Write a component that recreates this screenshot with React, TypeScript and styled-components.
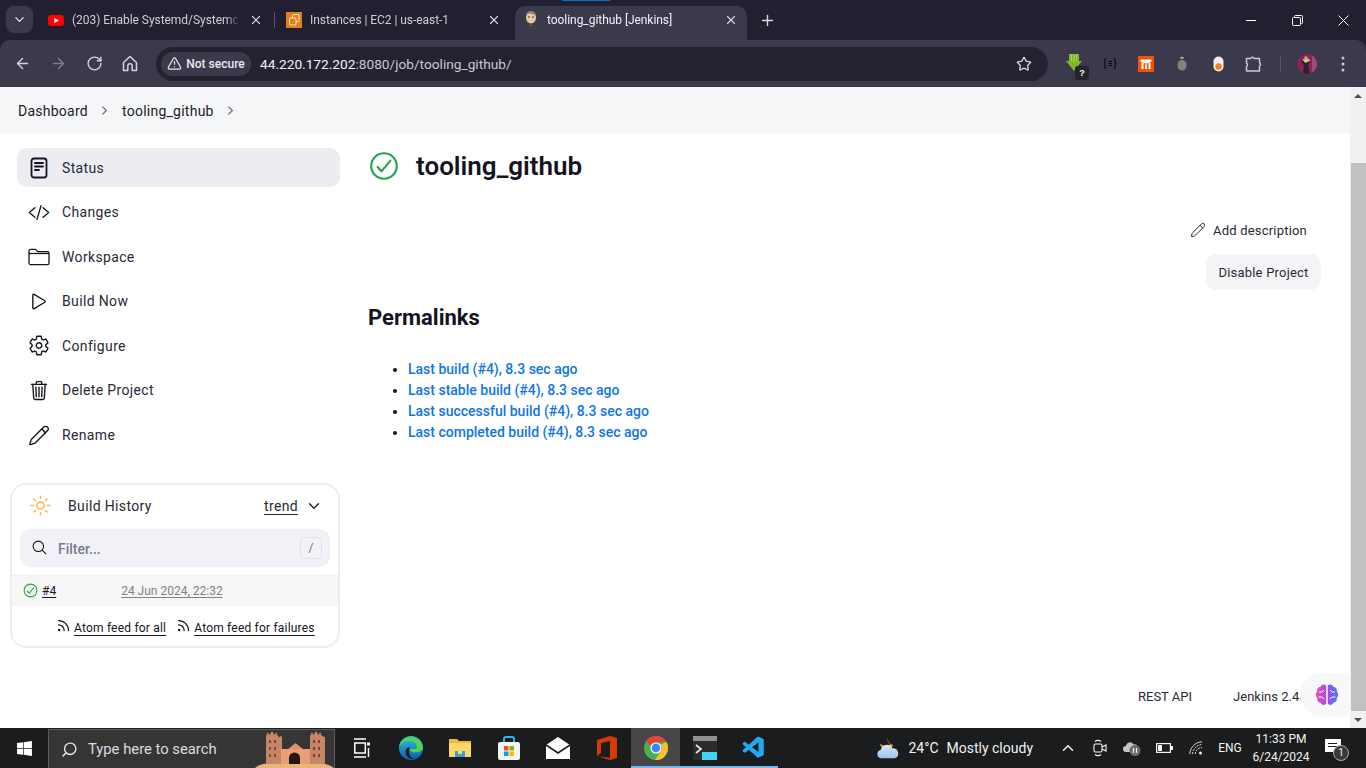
import React from "react";
import styled, { createGlobalStyle } from "styled-components";
import {
  IoCheckmarkCircleOutline,
  IoChevronDown,
  IoChevronForward,
  IoCodeSlashOutline,
  IoPlayOutline,
  IoSearchOutline,
  IoSettingsOutline,
  IoSunnyOutline,
  IoTrashOutline,
} from "react-icons/io5";
import {
  LuArrowLeft,
  LuArrowRight,
  LuRotateCw,
  LuStar,
  LuX,
  LuPlus,
  LuPencil,
  LuTriangleAlert,
  LuChevronUp,
  LuRss,
  LuSearch,
} from "react-icons/lu";
import { FaWindows } from "react-icons/fa";
import { VscVscode } from "react-icons/vsc";

const GlobalStyle = createGlobalStyle`
  html, body { margin: 0; padding: 0; height: 100%; overflow: hidden; background: #fff; }
  * { box-sizing: border-box; }
  body { font-family: Roboto, "Noto Sans", sans-serif; }
`;

const navItems = [
  { id: 1, icon: <StatusIcon />, label: "Status", active: true },
  { id: 2, icon: <IoCodeSlashOutline />, label: "Changes" },
  { id: 3, icon: <FolderIcon />, label: "Workspace" },
  { id: 4, icon: <IoPlayOutline />, label: "Build Now" },
  { id: 5, icon: <IoSettingsOutline />, label: "Configure" },
  { id: 6, icon: <IoTrashOutline />, label: "Delete Project" },
  { id: 7, icon: <LuPencil strokeWidth={1.5} />, label: "Rename" },
];

const permalinks = [
  "Last build (#4), 8.3 sec ago",
  "Last stable build (#4), 8.3 sec ago",
  "Last successful build (#4), 8.3 sec ago",
  "Last completed build (#4), 8.3 sec ago",
];

function StatusIcon() {
  return (
    <svg width="20" height="22" viewBox="0 0 20 22" fill="none" stroke="#14141f" strokeWidth="1.8" strokeLinecap="round">
      <rect x="2.5" y="1.5" width="15" height="19" rx="2.5" />
      <path d="M6 6h8M6 9.5h8M6 13h4" />
    </svg>
  );
}

function FolderIcon() {
  return (
    <svg width="22" height="18" viewBox="0 0 22 18" fill="none" stroke="#14141f" strokeWidth="1.3" strokeLinejoin="round">
      <path d="M1 15V3a1.6 1.6 0 0 1 1.6-1.6h5l2 2.200h9.800A1.600 1.600 0 0 1 21 5.200V15a1.600 1.600 0 0 1-1.600 1.600H2.600A1.600 1.600 0 0 1 1 15z" />
      <path d="M1 5.500h20" />
    </svg>
  );
}

function YoutubeIcon() {
  return (
    <svg width="16" height="11" viewBox="0 0 16 11">
      <rect width="16" height="11" rx="3" fill="#f00" />
      <path d="M6.300 3 11 5.500 6.300 8z" fill="#fff" />
    </svg>
  );
}

function AwsIcon() {
  return (
    <svg width="16" height="16" viewBox="0 0 16 16">
      <rect width="16" height="16" fill="#e2801c" />
      <rect x="6.500" y="2.500" width="6.500" height="7" rx="1" fill="none" stroke="#fbe3c8" strokeWidth="1" />
      <rect x="3.500" y="6" width="6.500" height="7" rx="1" fill="#e2801c" stroke="#fbe3c8" strokeWidth="1" />
    </svg>
  );
}

function JenkinsIcon() {
  return (
    <svg width="16" height="18" viewBox="0 0 16 18">
      <ellipse cx="8" cy="6.500" rx="5" ry="6" fill="#e8c9a8" />
      <path d="M3 6c0-4 2-6 5-6s5 2 5 5c-2-2-6-3-8-2-1 .6-2 2-2 3z" fill="#8a8170" />
      <path d="M3 18c0-3 2-5 5-5s5 2 5 5z" fill="#39424a" />
      <path d="M7 13.500h2l.4 1.600H6.600z" fill="#c53a34" />
      <circle cx="6" cy="6" r=".8" fill="#222" />
      <circle cx="10" cy="6" r=".8" fill="#222" />
    </svg>
  );
}

function HomeIcon() {
  return (
    <svg width="16" height="17" viewBox="0 0 16 17" fill="none" stroke="currentColor" strokeWidth="1.500" strokeLinejoin="round">
      <path d="M1.500 7.500 8 1.500l6.500 6V15.500h-4.300V11a2.200 2.200 0 0 0-4.400 0v4.500H1.500z" />
    </svg>
  );
}

function SaverIcon() {
  return (
    <svg width="16" height="19" viewBox="0 0 16 19">
      <path d="M3 0h10v7h3L8 17 0 7h3z" fill="#7fb52a" />
      <path d="M5.500 0v7M8 0v9M10.500 0v7" stroke="#a7d83f" strokeWidth="1" />
    </svg>
  );
}

function JsonIcon() {
  return (
    <svg width="14" height="11" viewBox="0 0 14 11" fill="none" stroke="#0c0c10" strokeWidth="1.200">
      <path d="M3 .6C1.500.6 2 2.500 2 4c0 1-.4 1.500-1.300 1.500C1.600 5.500 2 6 2 7c0 1.500-.5 3.400 1 3.400" />
      <path d="M11 .6c1.500 0 1 1.900 1 3.400 0 1 .4 1.500 1.300 1.500-.9 0-1.300.5-1.300 1.500 0 1.500.5 3.400-1 3.400" />
      <path d="M5 3.500h4M5 5.500h4M5 7.500h4" />
    </svg>
  );
}

function RibbonIcon() {
  return (
    <svg width="16" height="16" viewBox="0 0 16 16">
      <rect width="16" height="16" fill="#f4520b" />
      <path d="M2.500 3.500h11v2.200L8 7.800 2.500 5.700z" fill="#fff" />
      <path d="M3.500 7h2v6h-2zM7 8.500h2V13H7zM10.500 7h2v6h-2z" fill="#fff" />
    </svg>
  );
}

function BeanIcon() {
  return (
    <svg width="10" height="15" viewBox="0 0 10 15">
      <path d="M3 1.500C3 .5 7 .5 7 1.500L6.500 3h-3z" fill="#9b9a94" />
      <path d="M5 4c3 0 4.500 2 4.500 5S8 14.500 5 14.500.5 12 .5 9 2 4 5 4z" fill="#84837f" />
    </svg>
  );
}

function EggIcon() {
  return (
    <svg width="11" height="16" viewBox="0 0 11 16">
      <rect x=".5" y=".5" width="10" height="15" rx="5" fill="#f5efe8" />
      <circle cx="5.500" cy="10.500" r="3.200" fill="#f08020" />
    </svg>
  );
}

function PuzzleIcon() {
  return (
    <svg width="18" height="17" viewBox="0 0 18 17" fill="none" stroke="#c9c7d8" strokeWidth="1.500" strokeLinejoin="round">
      <path d="M1.500 3.500h4.300a1.800 1.800 0 0 1 3.400 0h5.300v4.200a1.800 1.800 0 0 1 0 3.200v5H1.500v-4.300a2.200 2.200 0 0 0 0-3.600z" />
    </svg>
  );
}

function AvatarIcon() {
  return (
    <svg width="20" height="20" viewBox="0 0 20 20">
      <clipPath id="avatarClip">
        <circle cx="10" cy="10" r="10" />
      </clipPath>
      <g clipPath="url(#avatarClip)">
        <rect width="20" height="20" fill="#8a2358" />
        <rect x="15" y="0" width="5" height="20" fill="#a0506f" />
        <path d="M4 6l6-2 3 3-2 5 2 8H6l1-8z" fill="#2a2026" />
        <path d="M5 5.500l6-1 2.500 2-5 2.500z" fill="#d8c58c" />
        <circle cx="9" cy="4" r="1.800" fill="#c9a27c" />
      </g>
    </svg>
  );
}

function MenuDots() {
  return (
    <svg width="4" height="16" viewBox="0 0 4 16" fill="#c9c7d8">
      <circle cx="2" cy="2" r="1.500" />
      <circle cx="2" cy="8" r="1.500" />
      <circle cx="2" cy="14" r="1.500" />
    </svg>
  );
}

function MinimizeIcon() {
  return (
    <svg width="10" height="10" viewBox="0 0 10 10" stroke="#fff" strokeWidth="1">
      <path d="M0 5.500h10" />
    </svg>
  );
}

function RestoreIcon() {
  return (
    <svg width="11" height="11" viewBox="0 0 11 11" fill="none" stroke="#fff" strokeWidth="1">
      <rect x=".5" y="2.500" width="8" height="8" rx="1" />
      <path d="M2.500 2.500v-1a1 1 0 0 1 1-1h6a1 1 0 0 1 1 1v6a1 1 0 0 1-1 1h-1" />
    </svg>
  );
}

function CloseIcon() {
  return (
    <svg width="11" height="11" viewBox="0 0 11 11" stroke="#fff" strokeWidth="1">
      <path d="M.5.500l10 10M10.500.500l-10 10" />
    </svg>
  );
}

function BrainIcon() {
  return (
    <svg width="26" height="26" viewBox="0 0 26 26" fill="none">
      <defs>
        <linearGradient id="brainGrad" x1="0" y1="0" x2="1" y2="0">
          <stop offset="0" stopColor="#ef4fa8" />
          <stop offset="0.55" stopColor="#9a4df0" />
          <stop offset="1" stopColor="#4c7df0" />
        </linearGradient>
      </defs>
      <path d="M12.200 3.500c-2-2-5-1-5.500 1.200C4.200 5 2.600 7.200 3.300 9.300 1.300 11 1.300 14.500 3.300 16c-.5 2.600 1.300 4.700 3.400 4.800.7 2.200 3.800 3 5.500 1zM13.800 3.500c2-2 5-1 5.500 1.200 2.500.3 4.100 2.500 3.400 4.600 2 1.700 2 5.200 0 6.700.5 2.600-1.300 4.700-3.400 4.800-.7 2.200-3.800 3-5.500 1z" fill="url(#brainGrad)" />
      <path d="M5 10h3l2-2M4.500 15H8l2 2M21 10h-3l-2-2M21.500 15H18l-2 2" stroke="#fff" strokeWidth="1" />
    </svg>
  );
}

function EdgeIcon() {
  return (
    <svg width="26" height="26" viewBox="0 0 26 26">
      <defs>
        <linearGradient id="edgeA" x1="0" y1="0" x2="0" y2="1">
          <stop offset="0" stopColor="#35c1f1" />
          <stop offset="1" stopColor="#0c59a4" />
        </linearGradient>
      </defs>
      <circle cx="13" cy="13" r="12" fill="url(#edgeA)" />
      <path d="M25 13c0-6-5-11-12-11C7 2 2 6 1 12c2-4 6-6 10-6 5 0 8 3 8 6 0 1-.6 2-2 2h-5c0 3 4 4 8 3 2-.6 5-2 5-4z" fill="#54d34e" />
      <path d="M11 12c-3 1-4 4-3 7 1 3 4 5 8 5-3-1-5-4-5-7 0-2 1-4 0-5z" fill="#1b1c1d" />
    </svg>
  );
}

function ExplorerIcon() {
  return (
    <svg width="22" height="22" viewBox="0 0 22 22">
      <path d="M0 2h8l2 2h12v16H0z" fill="#f0b93a" />
      <path d="M0 6h22v14H0z" fill="#fbd768" />
      <path d="M6 14h10v6H6z" fill="#2f9fe0" />
      <path d="M9 14h4v3H9z" fill="#fbd768" />
    </svg>
  );
}

function StoreIcon() {
  return (
    <svg width="22" height="24" viewBox="0 0 22 24">
      <path d="M6 7V3a2 2 0 0 1 2-2h6a2 2 0 0 1 2 2v4" fill="none" stroke="#2bb6e8" strokeWidth="2" />
      <rect x="0" y="6" width="22" height="18" rx="2" fill="#f4f4f4" />
      <rect x="6" y="10" width="4.500" height="4.500" fill="#f25022" />
      <rect x="11.500" y="10" width="4.500" height="4.500" fill="#7fba00" />
      <rect x="6" y="15.500" width="4.500" height="4.500" fill="#00a4ef" />
      <rect x="11.500" y="15.500" width="4.500" height="4.500" fill="#ffb900" />
    </svg>
  );
}

function MailIcon() {
  return (
    <svg width="24" height="24" viewBox="0 0 24 24">
      <path d="M0 9 12 1l12 8v14H0z" fill="#fff" />
      <path d="M0 9l12 8 12-8" fill="none" stroke="#1b1c1d" strokeWidth="1.600" />
    </svg>
  );
}

function OfficeIcon() {
  return (
    <svg width="20" height="24" viewBox="0 0 20 24">
      <path d="M0 4 13 0l7 2v20l-7 2-13-4 13 2V5L4 7v10l-4 3z" fill="#d83b01" />
    </svg>
  );
}

function ChromeIcon() {
  return (
    <svg width="24" height="24" viewBox="0 0 24 24">
      <circle cx="12" cy="12" r="12" fill="#4caf50" />
      <path d="M12 0a12 12 0 0 1 10.400 6H12a6 6 0 0 0-5.600 3.800L2.200 5A12 12 0 0 1 12 0z" fill="#ea4335" />
      <path d="M22.400 6A12 12 0 0 1 11 24l5.200-8.200A6 6 0 0 0 17 8.500z" fill="#fbc02d" />
      <circle cx="12" cy="12" r="5.600" fill="#fff" />
      <circle cx="12" cy="12" r="4.400" fill="#4285f4" />
    </svg>
  );
}

function TerminalIcon() {
  return (
    <svg width="24" height="24" viewBox="0 0 24 24">
      <rect y="0" width="24" height="24" fill="#2c2c2c" />
      <rect y="0" width="24" height="5" fill="#8f8f8f" />
      <path d="M3 9l5 4-5 4" fill="none" stroke="#e8e8e8" strokeWidth="1.700" />
      <rect x="9" y="16" width="15" height="8" fill="#3fd4f4" />
    </svg>
  );
}

function TaskViewIcon() {
  return (
    <svg width="16" height="20" viewBox="0 0 16 20" fill="none" stroke="#fff" strokeWidth="1.500">
      <path d="M0 1h12M0 19h12" />
      <rect x=".8" y="5" width="10.500" height="10" />
      <path d="M13 4.500h3v3h-3z" fill="#fff" stroke="none" />
      <path d="M14.500 10v9" />
    </svg>
  );
}

function CastleArt() {
  return (
    <svg width="79" height="39" viewBox="0 0 79 39">
      <path d="M0 39c6-5 14-5 20-5h40c7 0 14 1 19 5z" fill="#e9b578" />
      <path d="M11 7l2-4 1.500 3L17 2l2.500 4L21 3l2 4 1 1 3-1v28H11zM55 7l2-4 1.500 3L61 2l2.500 4L65 3l2 4 3 1v27H55z" fill="#c58566" />
      <path d="M26 20h29v15H26z" fill="#e89e76" />
      <path d="M33 20l7.500-6 7.500 6z" fill="#e0906a" />
      <path d="M34 35v-6a5.500 5.500 0 0 1 11 0v6z" fill="#26160f" />
      <path d="M14 11h2v3h-2zM19 11h2v3h-2zM14 18h2v3h-2zM19 18h2v3h-2zM14 25h2v3h-2zM19 25h2v3h-2zM58 11h2v3h-2zM63 11h2v3h-2zM58 18h2v3h-2zM63 18h2v3h-2zM58 25h2v3h-2zM63 25h2v3h-2z" fill="#7a4836" />
    </svg>
  );
}

function WeatherIcon() {
  return (
    <svg width="24" height="24" viewBox="0 0 24 24">
      <defs>
        <linearGradient id="cloudGrad" x1="0" y1="0" x2="0" y2="1">
          <stop offset="0" stopColor="#d7e7f8" />
          <stop offset="1" stopColor="#9cc3ee" />
        </linearGradient>
      </defs>
      <path d="M11 0c-.6 3 .5 6 3 8-3 2.500-8 2-11-.5 1 3.500 4 6 8 6 3 0 6-2 6-5-3.500 0-6-4-6-8.500z" fill="#f0a22e" />
      <path d="M5 23a4.500 4.500 0 0 1-1-8.900 6.500 6.500 0 0 1 12.300-1.700A5.500 5.500 0 0 1 19 23z" fill="url(#cloudGrad)" />
    </svg>
  );
}

function MeetIcon() {
  return (
    <svg width="14" height="19" viewBox="0 0 14 19" fill="none" stroke="#f2f2f2" strokeWidth="1.100">
      <rect x="1" y="5" width="8" height="8" rx="1.500" />
      <path d="M9 8l4-2v6l-4-2" />
      <path d="M2 2.500c1.500-1.500 4.500-1.500 6 0M2 15.500c1.500 1.500 4.500 1.500 6 0" />
    </svg>
  );
}

function CloudPauseIcon() {
  return (
    <svg width="18" height="16" viewBox="0 0 18 16">
      <path d="M3 12a3 3 0 0 1 0-6 4 4 0 0 1 7.500-1.500A3.500 3.500 0 0 1 13 11v1z" fill="#c6c6c6" />
      <circle cx="12" cy="10.500" r="5.500" fill="#6a6a6a" />
      <path d="M10.500 8v5M13.500 8v5" stroke="#f2f2f2" strokeWidth="1.200" />
    </svg>
  );
}

function BatteryIcon() {
  return (
    <svg width="17" height="10" viewBox="0 0 17 10">
      <rect x=".6" y=".6" width="13.800" height="8.800" fill="none" stroke="#f2f2f2" strokeWidth="1.200" />
      <rect x="2" y="2" width="4" height="6" fill="#f2f2f2" />
      <rect x="15" y="3" width="2" height="4" fill="#f2f2f2" />
    </svg>
  );
}

function WifiIcon() {
  return (
    <svg width="14" height="14" viewBox="0 0 14 14" fill="none" stroke="#d8d8d8" strokeWidth="1">
      <path d="M.8 13C1 6.500 6.500 1 13 .8" />
      <path d="M3.500 13c.2-5 4.500-9.300 9.500-9.500" strokeDasharray="2 1" />
      <path d="M6.200 13c.2-3.500 3-6.300 6.800-6.500" strokeDasharray="2 1" />
      <circle cx="11.500" cy="12" r="1.500" fill="#f2f2f2" stroke="none" />
    </svg>
  );
}

export default function App() {
  return (
    <>
      <GlobalStyle />
      <Screen>
        <TabStrip>
          <TopAccent />
          <TabMenu>
            <IoChevronDown />
          </TabMenu>
          <Tab>
            <YoutubeIcon />
            <TabTitle>(203) Enable Systemd/Systemctl</TabTitle>
            <TabClose>
              <LuX />
            </TabClose>
          </Tab>
          <TabDivider />
          <Tab>
            <AwsIcon />
            <TabTitle>Instances | EC2 | us-east-1</TabTitle>
            <TabClose>
              <LuX />
            </TabClose>
          </Tab>
          <Tab $active>
            <JenkinsIcon />
            <TabTitle>tooling_github [Jenkins]</TabTitle>
            <TabClose>
              <LuX />
            </TabClose>
          </Tab>
          <NewTab>
            <LuPlus />
          </NewTab>
          <WindowControls>
            <WindowButton>
              <MinimizeIcon />
            </WindowButton>
            <WindowButton>
              <RestoreIcon />
            </WindowButton>
            <WindowButton>
              <CloseIcon />
            </WindowButton>
          </WindowControls>
        </TabStrip>

        <Toolbar>
          <NavButtons>
            <NavButton>
              <LuArrowLeft />
            </NavButton>
            <NavButton $dim>
              <LuArrowRight />
            </NavButton>
            <NavButton>
              <LuRotateCw />
            </NavButton>
            <NavButton>
              <HomeIcon />
            </NavButton>
          </NavButtons>
          <Omnibox>
            <SecurityChip>
              <LuTriangleAlert />
              Not secure
            </SecurityChip>
            <Url>
              44.220.172.202<UrlDim>:8080/job/tooling_github/</UrlDim>
            </Url>
            <StarSlot>
              <LuStar />
            </StarSlot>
          </Omnibox>
          <Extensions>
            <ExtSlot>
              <SaverIcon />
              <ExtBadge>?</ExtBadge>
            </ExtSlot>
            <ExtSlot>
              <JsonIcon />
            </ExtSlot>
            <ExtSlot>
              <RibbonIcon />
            </ExtSlot>
            <ExtSlot>
              <BeanIcon />
            </ExtSlot>
            <ExtSlot>
              <EggIcon />
            </ExtSlot>
            <ExtSlot>
              <PuzzleIcon />
            </ExtSlot>
            <ToolbarSep />
            <ExtSlot>
              <AvatarIcon />
            </ExtSlot>
            <ExtSlot>
              <MenuDots />
            </ExtSlot>
          </Extensions>
        </Toolbar>

        <PageArea>
          <Content>
            <Breadcrumbs>
              <Crumb>Dashboard</Crumb>
              <IoChevronForward />
              <Crumb>tooling_github</Crumb>
              <IoChevronForward />
            </Breadcrumbs>

            <Columns>
              <Sidebar>
                <SideNav>
                  {navItems.map((item) => (
                    <SideItem key={item.id} $active={item.active}>
                      <SideIcon>{item.icon}</SideIcon>
                      {item.label}
                    </SideItem>
                  ))}
                </SideNav>

                <HistoryCard>
                  <HistoryHead>
                    <SunSlot>
                      <IoSunnyOutline />
                    </SunSlot>
                    <HistoryTitle>Build History</HistoryTitle>
                    <Trend>trend</Trend>
                    <TrendChevron>
                      <IoChevronDown />
                    </TrendChevron>
                  </HistoryHead>
                  <FilterBox>
                    <IoSearchOutline />
                    <FilterText>Filter...</FilterText>
                    <KeyHint>/</KeyHint>
                  </FilterBox>
                  <BuildRow>
                    <IoCheckmarkCircleOutline />
                    <BuildNumber>#4</BuildNumber>
                    <BuildDate>24 Jun 2024, 22:32</BuildDate>
                  </BuildRow>
                  <Feeds>
                    <LuRss />
                    <FeedLink>Atom feed for all</FeedLink>
                    <LuRss />
                    <FeedLink>Atom feed for failures</FeedLink>
                  </Feeds>
                </HistoryCard>
              </Sidebar>

              <Main>
                <TitleRow>
                  <IoCheckmarkCircleOutline />
                  <Title>tooling_github</Title>
                </TitleRow>
                <Actions>
                  <AddDescription>
                    <LuPencil strokeWidth={1.5} />
                    Add description
                  </AddDescription>
                  <DisableButton>Disable Project</DisableButton>
                </Actions>
                <SectionHead>Permalinks</SectionHead>
                <LinkList>
                  {permalinks.map((text) => (
                    <li key={text}>{text}</li>
                  ))}
                </LinkList>
              </Main>
            </Columns>

            <Footer>
              <FooterLink>REST API</FooterLink>
              <FooterLink>Jenkins 2.452.2</FooterLink>
            </Footer>
            <BrainBubble>
              <BrainIcon />
            </BrainBubble>
          </Content>

          <Scrollbar>
            <ScrollArrow />
            <ScrollThumb />
            <ScrollArrow $down />
          </Scrollbar>
        </PageArea>

        <Taskbar>
          <StartButton>
            <FaWindows />
          </StartButton>
          <SearchBox>
            <LuSearch />
            <SearchText>Type here to search</SearchText>
            <CastleArt />
          </SearchBox>
          <TaskApps>
            <TaskApp>
              <TaskViewIcon />
            </TaskApp>
            <TaskApp>
              <EdgeIcon />
            </TaskApp>
            <TaskApp>
              <ExplorerIcon />
            </TaskApp>
            <TaskApp>
              <StoreIcon />
            </TaskApp>
            <TaskApp>
              <MailIcon />
            </TaskApp>
            <TaskApp>
              <OfficeIcon />
            </TaskApp>
            <TaskApp $current>
              <ChromeIcon />
            </TaskApp>
            <TaskApp $open>
              <TerminalIcon />
            </TaskApp>
            <TaskApp $open>
              <VscodeSlot>
                <VscVscode />
              </VscodeSlot>
            </TaskApp>
          </TaskApps>
          <Tray>
            <WeatherGroup>
              <WeatherIcon />
              <WeatherText>24°C</WeatherText>
              <WeatherText>Mostly cloudy</WeatherText>
            </WeatherGroup>
            <TrayIcons>
              <TraySlot>
                <LuChevronUp />
              </TraySlot>
              <TraySlot>
                <MeetIcon />
              </TraySlot>
              <TraySlot>
                <CloudPauseIcon />
              </TraySlot>
              <TraySlot>
                <BatteryIcon />
              </TraySlot>
              <TraySlot>
                <WifiIcon />
              </TraySlot>
            </TrayIcons>
            <TrayLang>ENG</TrayLang>
            <Clock>
              <span>11:33 PM</span>
              <span>6/24/2024</span>
            </Clock>
            <Notify>
              <NotifyPage />
              <NotifyCount>1</NotifyCount>
            </Notify>
          </Tray>
        </Taskbar>
      </Screen>
    </>
  );
}

const Screen = styled.div`
  width: 100vw;
  height: 100vh;
  display: flex;
  flex-direction: column;
  overflow: hidden;
  background: #211f30;
`;

const TabStrip = styled.div`
  position: relative;
  height: 40px;
  flex: none;
  display: flex;
  align-items: flex-end;
  padding-left: 6px;
`;

const TopAccent = styled.div`
  position: absolute;
  top: 0;
  left: 562px;
  width: 48px;
  height: 1px;
  background: #0a6fc9;
`;

const TabMenu = styled.div`
  width: 27px;
  height: 27px;
  margin: 0 5px 7px 0;
  border-radius: 8px;
  background: #3b3a4d;
  color: #e6e4ee;
  font-size: 13px;
  display: flex;
  align-items: center;
  justify-content: center;
`;

const Tab = styled.div<{ $active?: boolean }>`
  width: ${(p) => (p.$active ? "232px" : "236px")};
  height: 34px;
  margin-left: ${(p) => (p.$active ? "3px" : "0")};
  padding: 0 ${(p) => (p.$active ? "8px" : "10px")} 6px;
  display: flex;
  align-items: center;
  gap: 8px;
  border-radius: 10px 10px 0 0;
  background: ${(p) => (p.$active ? "#3b3a4d" : "transparent")};
  color: ${(p) => (p.$active ? "#f2f1f7" : "#cfcdda")};
  font-size: 12px;
`;

const TabTitle = styled.span`
  flex: 1;
  min-width: 0;
  white-space: nowrap;
  overflow: hidden;
  letter-spacing: -0.05px;
  mask-image: linear-gradient(to right, #000 92%, transparent);
`;

const TabClose = styled.span`
  width: 16px;
  height: 16px;
  flex: none;
  font-size: 14px;
  color: #d5d3df;
  display: flex;
  align-items: center;
  justify-content: center;
`;

const TabDivider = styled.div`
  width: 1px;
  height: 16px;
  margin: 0 1px 12px 0;
  background: #56556a;
`;

const NewTab = styled.div`
  width: 24px;
  height: 34px;
  margin-left: 8px;
  padding-bottom: 6px;
  color: #d9d7e2;
  font-size: 17px;
  display: flex;
  align-items: center;
  justify-content: center;
`;

const WindowControls = styled.div`
  margin-left: auto;
  height: 40px;
  display: flex;
`;

const WindowButton = styled.div`
  width: 46px;
  height: 40px;
  display: flex;
  align-items: center;
  justify-content: center;
`;

const Toolbar = styled.div`
  height: 47px;
  flex: none;
  background: #3b3a4d;
  border-radius: 10px 10px 0 0;
  display: flex;
  align-items: center;
  padding: 0 5px 0 4px;
`;

const NavButtons = styled.div`
  display: flex;
  width: 152px;
  flex: none;
`;

const NavButton = styled.div<{ $dim?: boolean }>`
  width: 36px;
  height: 32px;
  color: ${(p) => (p.$dim ? "#7d7c8c" : "#d5d3df")};
  font-size: 17px;
  display: flex;
  align-items: center;
  justify-content: center;
`;

const Omnibox = styled.div`
  width: 892px;
  height: 34px;
  flex: none;
  border-radius: 17px;
  background: #24222f;
  display: flex;
  align-items: center;
  padding: 0 16px 0 5px;
  font-size: 13.7px;
`;

const SecurityChip = styled.div`
  height: 24px;
  width: 90px;
  flex: none;
  border-radius: 12px;
  background: #3b3a4d;
  color: #e9e8f0;
  font-size: 12px;
  font-weight: 500;
  display: flex;
  align-items: center;
  justify-content: center;
  gap: 4px;
  & svg {
    font-size: 15px;
  }
`;

const Url = styled.span`
  margin-left: 9px;
  color: #f4f3f8;
`;

const UrlDim = styled.span`
  color: #c9c7d4;
`;

const StarSlot = styled.span`
  margin-left: auto;
  display: flex;
  font-size: 16px;
  color: #d5d3df;
`;

const Extensions = styled.div`
  display: flex;
  align-items: center;
  margin-left: 8px;
`;

const ExtSlot = styled.div`
  position: relative;
  width: 36px;
  height: 32px;
  display: flex;
  align-items: center;
  justify-content: center;
`;

const ExtBadge = styled.span`
  position: absolute;
  right: 3px;
  bottom: 0;
  width: 14px;
  height: 14px;
  border-radius: 3px;
  background: #25242d;
  color: #fff;
  font: 700 9px/14px "Liberation Sans", sans-serif;
  text-align: center;
`;

const ToolbarSep = styled.div`
  width: 1px;
  height: 16px;
  margin: 0 8px;
  background: #56556a;
`;

const PageArea = styled.div`
  flex: 1;
  min-height: 0;
  display: flex;
  background: #fff;
`;

const Content = styled.div`
  position: relative;
  flex: 1;
  min-width: 0;
  display: flex;
  flex-direction: column;
  overflow: hidden;
  color: #14141f;
`;

const Breadcrumbs = styled.div`
  height: 46px;
  flex: none;
  background: #f5f6f8;
  display: flex;
  align-items: center;
  padding: 1px 0 0 18px;
  font-size: 14px;
  letter-spacing: 0.25px;
  & svg {
    font-size: 13px;
    color: #6d6b7b;
    margin: 0 11px 0 9px;
  }
`;

const Crumb = styled.span`
  color: #1d1c28;
  margin-right: 1px;
`;

const Columns = styled.div`
  flex: 1;
  min-height: 0;
  display: flex;
`;

const Sidebar = styled.aside`
  width: 350px;
  flex: none;
  padding: 15px 10px 0;
`;

const SideNav = styled.nav`
  display: flex;
  flex-direction: column;
  gap: 5.6px;
  padding-left: 7px;
`;

const SideItem = styled.div<{ $active?: boolean }>`
  height: 39px;
  display: flex;
  align-items: center;
  gap: 12px;
  padding-left: 11px;
  border-radius: 10px;
  background: ${(p) => (p.$active ? "#ecedf3" : "transparent")};
  font-size: 14px;
  letter-spacing: 0.35px;
  color: #2a2936;
`;

const SideIcon = styled.span`
  width: 22px;
  display: flex;
  align-items: center;
  justify-content: center;
  font-size: 23px;
  color: #14141f;
`;

const HistoryCard = styled.section`
  margin-top: 28px;
  height: 165px;
  border: 2px solid #ecedf3;
  border-radius: 16px;
  display: flex;
  flex-direction: column;
  overflow: hidden;
  font-size: 14px;
`;

const HistoryHead = styled.div`
  height: 44px;
  flex: none;
  display: flex;
  align-items: center;
  padding: 0 0 2px 17px;
  color: #2a2936;
`;

const SunSlot = styled.span`
  display: flex;
  font-size: 23px;
  color: #fdb03a;
`;

const HistoryTitle = styled.span`
  margin-left: 16px;
  letter-spacing: 0.35px;
`;

const Trend = styled.span`
  margin-left: auto;
  font-size: 14px;
  letter-spacing: 0.35px;
  text-decoration: underline;
  text-underline-offset: 3px;
`;

const TrendChevron = styled.span`
  display: flex;
  margin: 0 16px 0 8px;
  font-size: 16px;
`;

const FilterBox = styled.div`
  height: 38px;
  flex: none;
  margin: 0 8px;
  padding: 0 8px 0 11px;
  border-radius: 10px;
  background: #f1f2f7;
  display: flex;
  align-items: center;
  & > svg {
    font-size: 17px;
    color: #14141f;
  }
`;

const FilterText = styled.span`
  margin-left: 10px;
  padding-top: 2px;
  color: #7b7a90;
  font-size: 14px;
  font-weight: 500;
`;

const KeyHint = styled.span`
  margin-left: auto;
  width: 22px;
  height: 22px;
  border: 1px solid #e0e1e8;
  border-radius: 4px;
  color: #6d6c80;
  font-size: 12px;
  display: flex;
  align-items: center;
  justify-content: center;
`;

const BuildRow = styled.div`
  height: 31px;
  flex: none;
  margin-top: 8px;
  padding-left: 10px;
  background: #f6f6f6;
  border-top: 1px solid #f0f0f2;
  display: flex;
  align-items: center;
  font-size: 12px;
  & > svg {
    font-size: 17px;
    color: #1ea64b;
  }
`;

const BuildNumber = styled.span`
  margin-left: 3px;
  text-decoration: underline;
  text-underline-offset: 2px;
`;

const BuildDate = styled.span`
  margin-left: 65px;
  color: #80808c;
  text-decoration: underline;
  text-underline-offset: 2px;
  font-size: 12px;
`;

const Feeds = styled.div`
  flex: 1;
  display: flex;
  align-items: center;
  padding: 5px 0 0 44px;
  font-size: 12px;
  letter-spacing: 0.2px;
  & > svg {
    font-size: 15px;
    margin-bottom: 5px;
  }
`;

const FeedLink = styled.span`
  margin: 0 10px 0 3px;
  text-decoration: underline;
  text-underline-offset: 3px;
`;

const Main = styled.main`
  flex: 1;
  min-width: 0;
  padding: 18px 29px 0 18px;
  display: flex;
  flex-direction: column;
`;

const TitleRow = styled.div`
  display: flex;
  align-items: center;
  height: 30px;
  & > svg {
    font-size: 34px;
    color: #1ea64b;
    margin-left: -1px;
  }
`;

const Title = styled.h1`
  margin: 0 0 0 15px;
  font-size: 26px;
  font-weight: 600;
  color: #14141f;
`;

const Actions = styled.div`
  margin-top: 39px;
  display: flex;
  flex-direction: column;
  align-items: flex-end;
  gap: 14px;
`;

const AddDescription = styled.div`
  height: 20px;
  display: flex;
  align-items: center;
  gap: 7px;
  margin-right: 14px;
  font-size: 13px;
  letter-spacing: 0.2px;
  color: #2a2936;
  & svg {
    font-size: 16px;
  }
`;

const DisableButton = styled.div`
  width: 115px;
  height: 36px;
  border-radius: 10px;
  background: #f5f5f8;
  font-size: 13px;
  letter-spacing: 0.2px;
  color: #2a2936;
  display: flex;
  align-items: center;
  justify-content: center;
`;

const SectionHead = styled.h2`
  margin: 14px 0 0;
  font-size: 22px;
  line-height: 28px;
  font-weight: 700;
  color: #14141f;
`;

const LinkList = styled.ul`
  margin: 27px 0 0;
  padding-left: 40px;
  font-size: 14px;
  line-height: 21px;
  font-weight: 500;
  color: #0f76e4;
  & li::marker {
    color: #14141f;
  }
`;

const Footer = styled.footer`
  height: 40px;
  flex: none;
  display: flex;
  align-items: flex-start;
  padding-left: 1138px;
  padding-top: 1px;
  gap: 41px;
  white-space: nowrap;
  font-size: 13px;
  color: #2a2936;
`;

const FooterLink = styled.span``;

const BrainBubble = styled.div`
  position: absolute;
  right: 0;
  bottom: 11px;
  width: 50px;
  height: 44px;
  border-radius: 22px 0 0 22px;
  background: #f8f8f8;
  display: flex;
  align-items: center;
  justify-content: center;
  padding-left: 4px;
`;

const Scrollbar = styled.div`
  width: 16px;
  flex: none;
  background: #f1f1f1;
  display: flex;
  flex-direction: column;
`;

const ScrollArrow = styled.div<{ $down?: boolean }>`
  height: 17px;
  flex: none;
  display: flex;
  align-items: center;
  justify-content: center;
  &::before {
    content: "";
    border-left: 4px solid transparent;
    border-right: 4px solid transparent;
    border-${(p) => (p.$down ? "top" : "bottom")}: 4px solid #505050;
  }
`;

const ScrollThumb = styled.div`
  flex: 1;
  margin: 59px 0 0 1px;
  background: #c1c1c1;
`;

const Taskbar = styled.div`
  height: 40px;
  flex: none;
  background: #1b1c1d;
  display: flex;
  color: #f2f2f2;
`;

const StartButton = styled.div`
  width: 48px;
  flex: none;
  color: #fff;
  font-size: 17px;
  display: flex;
  align-items: center;
  justify-content: center;
`;

const SearchBox = styled.div`
  width: 287px;
  flex: none;
  margin-top: 1px;
  background: #353535;
  border: 1px solid #5c5c5c;
  border-width: 1px 1px 0 1px;
  display: flex;
  align-items: flex-end;
  padding-left: 12px;
  overflow: hidden;
  & > svg:first-child {
    align-self: center;
    font-size: 17px;
    color: #e6e6e6;
    transform: scaleX(-1);
  }
`;

const SearchText = styled.span`
  align-self: center;
  flex: 1;
  margin-left: 10px;
  font-size: 14.8px;
  color: #d8dde2;
`;

const TaskApps = styled.div`
  display: flex;
  padding-left: 2px;
`;

const TaskApp = styled.div<{ $current?: boolean; $open?: boolean }>`
  width: 49px;
  flex: none;
  display: flex;
  align-items: center;
  justify-content: center;
  background: ${(p) => (p.$current ? "#474747" : "transparent")};
  border-bottom: 2px solid ${(p) => (p.$current || p.$open ? "#76b9ed" : "transparent")};
  border-top: 2px solid transparent;
`;

const VscodeSlot = styled.span`
  display: flex;
  font-size: 26px;
  color: #23a9f2;
`;

const Tray = styled.div`
  margin-left: auto;
  display: flex;
  align-items: center;
  padding-right: 25px;
  font-size: 14px;
`;

const WeatherGroup = styled.div`
  width: 156px;
  display: flex;
  align-items: center;
  & > svg {
    margin-right: 1px;
  }
`;

const WeatherText = styled.span`
  margin-left: 8px;
  white-space: nowrap;
`;

const TrayIcons = styled.div`
  display: flex;
  margin-left: 19px;
`;

const TraySlot = styled.div`
  width: 32px;
  height: 24px;
  font-size: 18px;
  display: flex;
  align-items: center;
  justify-content: center;
`;

const TrayLang = styled.span`
  width: 24px;
  margin-left: 6px;
  font-size: 12px;
  text-align: center;
`;

const Clock = styled.div`
  width: 52px;
  margin-left: 13px;
  display: flex;
  flex-direction: column;
  align-items: center;
  font-size: 12px;
  line-height: 18px;
  white-space: nowrap;
`;

const Notify = styled.div`
  position: relative;
  width: 16px;
  height: 18px;
  margin-left: 18px;
`;

const NotifyPage = styled.div`
  width: 16px;
  height: 13px;
  background: linear-gradient(#1b1c1d, #1b1c1d) 3px 4px / 9px 1px no-repeat,
    linear-gradient(#1b1c1d, #1b1c1d) 3px 7px / 9px 1px no-repeat, #fff;
`;

const NotifyCount = styled.span`
  position: absolute;
  right: -8px;
  bottom: -4px;
  width: 16px;
  height: 16px;
  border-radius: 50%;
  background: #3a3a3a;
  border: 1px solid #aaa;
  font-size: 10px;
  line-height: 14px;
  text-align: center;
`;
